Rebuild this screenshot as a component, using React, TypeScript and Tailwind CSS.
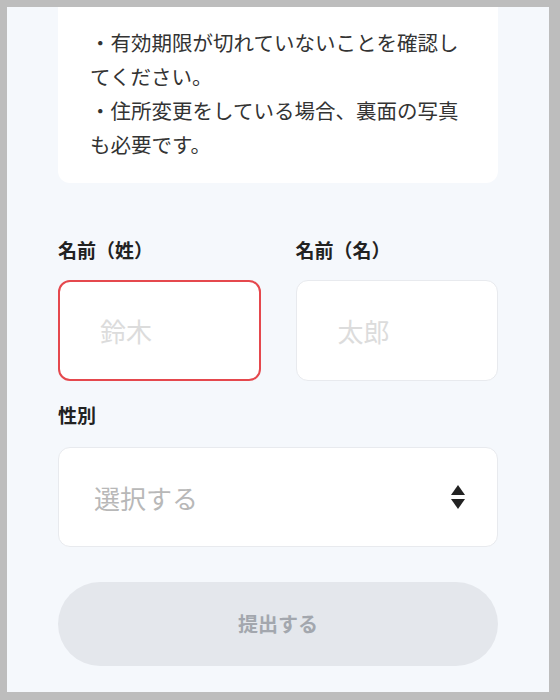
import { useState } from "react";

const font = {
  fontFamily: '"Noto Sans CJK JP", "Noto Sans", sans-serif',
};

function SortArrows() {
  return (
    <svg width="14" height="24" viewBox="0 0 14 24" className="shrink-0">
      <path d="M7 0 L14 10 L0 10 Z" fill="#222222" />
      <path d="M0 14 L14 14 L7 24 Z" fill="#222222" />
    </svg>
  );
}

export default function App() {
  const [lastName, setLastName] = useState("");
  const [firstName, setFirstName] = useState("");

  return (
    <div
      className="flex h-[700px] w-[560px] bg-[#bdbdbd] pb-[8px] pl-[7px] pr-[11px] pt-[7px]"
      style={font}
    >
      <div className="flex flex-1 flex-col bg-[#f5f8fc] px-[51px]">
        {/* Notes card (scrolled, top cut off) */}
        <div className="rounded-b-[12px] bg-white pb-[22px] pl-[32px] pr-[24px] pt-[18px] text-[20.5px] leading-[34px] text-[#333333]">
          <p>・有効期限が切れていないことを確認してください。</p>
          <p>・住所変更をしている場合、裏面の写真も必要です。</p>
        </div>

        {/* Name fields */}
        <div className="mt-[53px] grid grid-cols-2 gap-[35px]">
          <div className="flex flex-col">
            <label className="mb-[17px] text-[19px] font-bold leading-[27px] text-[#222222]">
              名前（姓）
            </label>
            <input
              value={lastName}
              onChange={(e) => setLastName(e.target.value)}
              placeholder="鈴木"
              className="h-[101px] w-full rounded-[12px] border-2 border-[#e5484d] bg-white pl-[40px] text-[26px] text-[#222222] outline-none placeholder:text-[#dcdcdc]"
            />
          </div>
          <div className="flex flex-col">
            <label className="mb-[17px] text-[19px] font-bold leading-[27px] text-[#222222]">
              名前（名）
            </label>
            <input
              value={firstName}
              onChange={(e) => setFirstName(e.target.value)}
              placeholder="太郎"
              className="h-[101px] w-full rounded-[12px] border border-[#e8eaee] bg-white pl-[41px] text-[26px] text-[#222222] outline-none placeholder:text-[#dcdcdc]"
            />
          </div>
        </div>

        {/* Gender */}
        <div className="mt-[20px] flex flex-col">
          <label className="mb-[19px] text-[19px] font-bold leading-[27px] text-[#222222]">
            性別
          </label>
          <button
            type="button"
            className="flex h-[100px] w-full items-center justify-between rounded-[12px] border border-[#e8eaee] bg-white pl-[35px] pr-[32px] text-left"
          >
            <span className="text-[26px] text-[#b8b8b8]">選択する</span>
            <SortArrows />
          </button>
        </div>

        {/* Submit */}
        <button
          type="button"
          disabled
          className="mt-[35px] h-[84px] w-full rounded-full bg-[#e4e7ec] text-[20px] font-bold text-[#a3a7ae]"
        >
          提出する
        </button>
      </div>
    </div>
  );
}
